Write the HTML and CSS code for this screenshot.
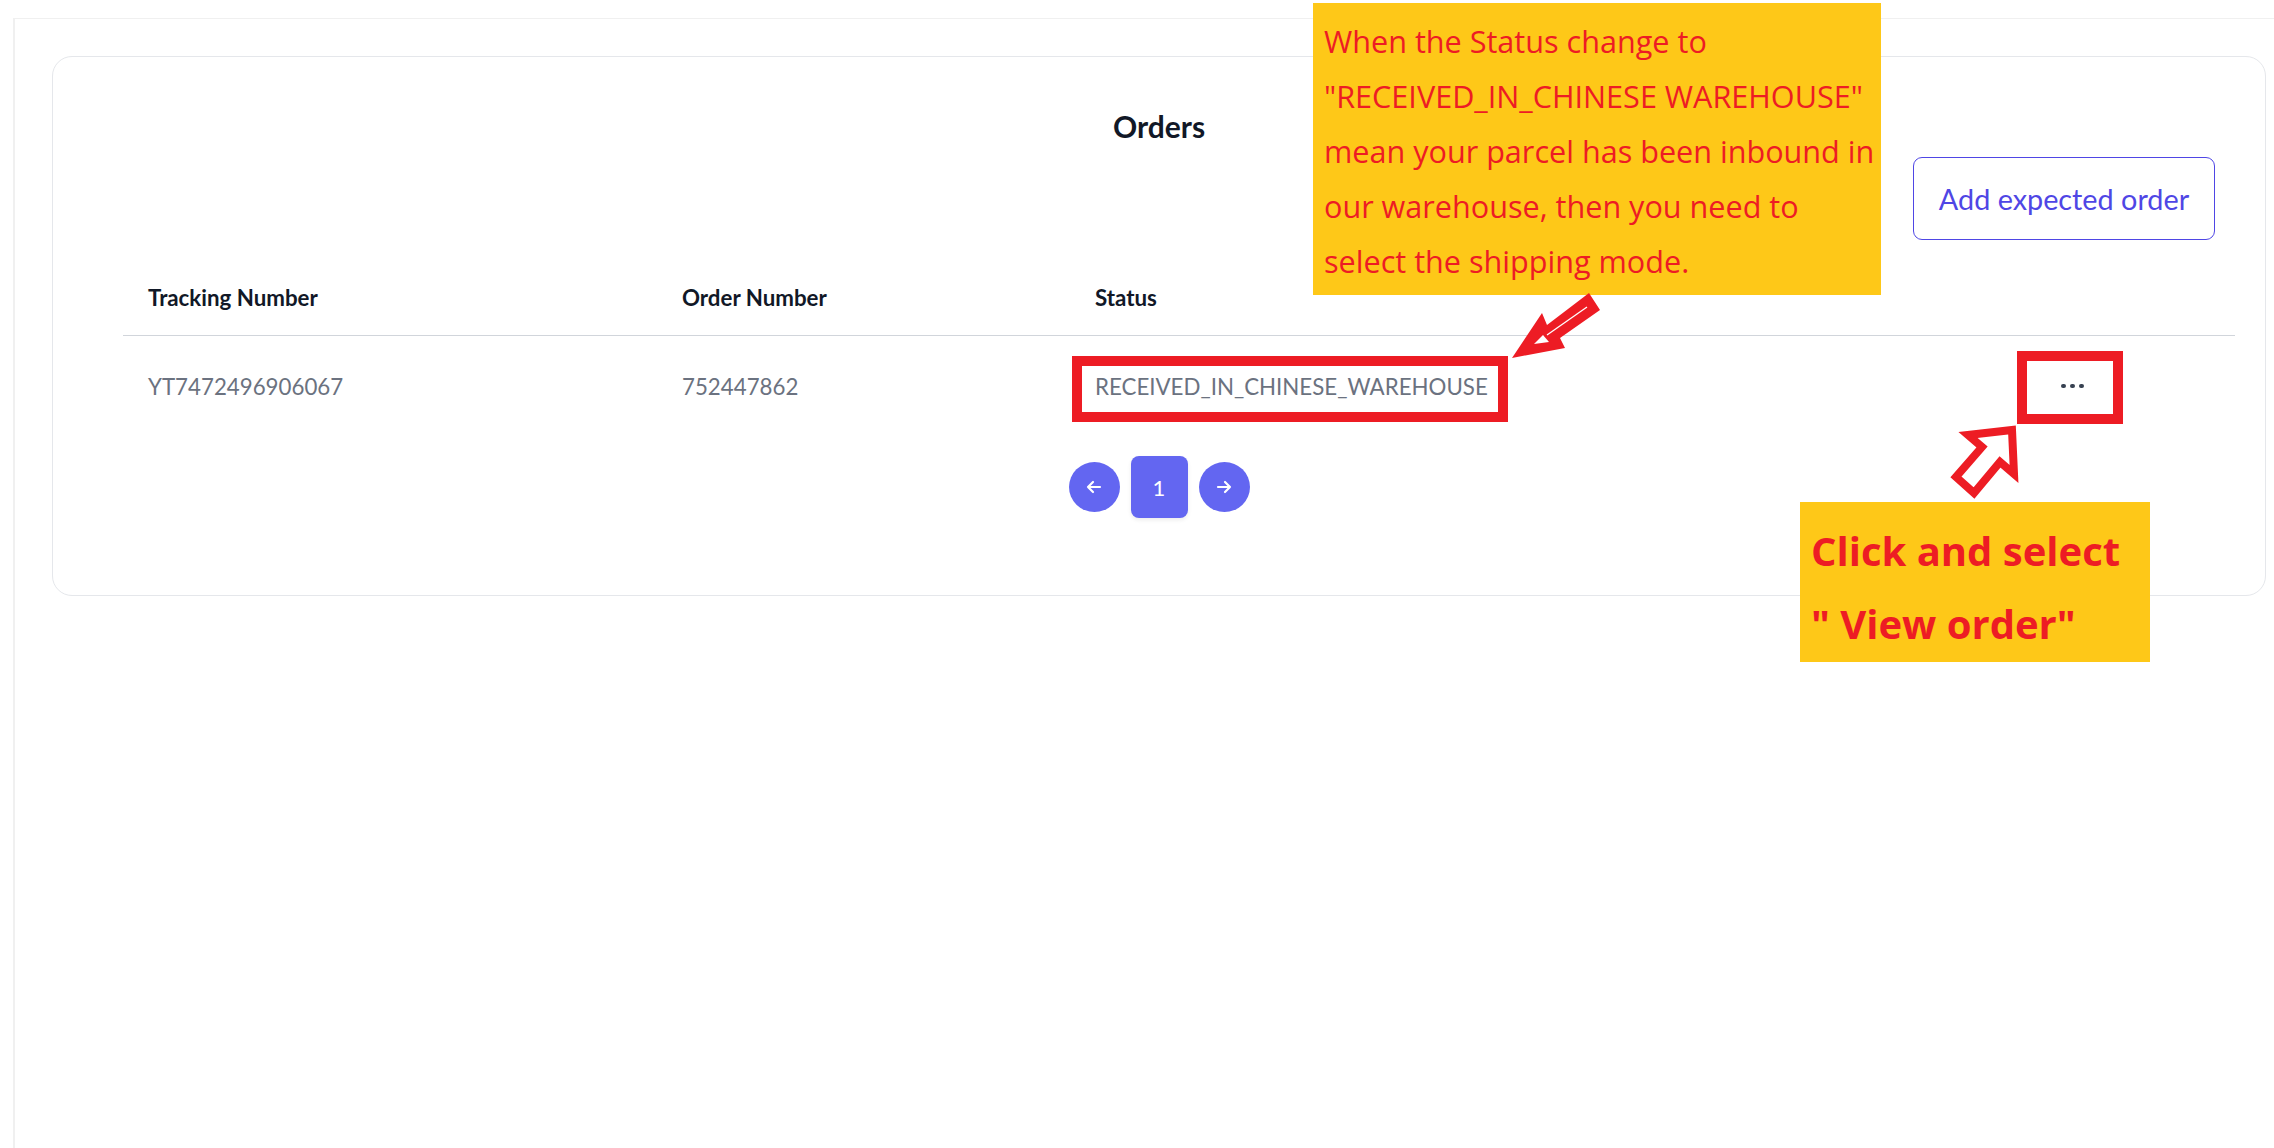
FILE: index.html
```html
<!DOCTYPE html>
<html lang="en">
<head>
    <meta charset="UTF-8">
    <meta name="viewport" content="width=device-width, initial-scale=1.0">
    <title>Orders</title>
    <link rel="stylesheet" href="styles.css">
</head>
<body>
    <div class="page">
        <div class="frame">
            <div class="card">
                <h2 class="card-title">Orders</h2>
                <div class="toolbar">
                    <button type="button" class="add-button">Add expected order</button>
                </div>

                <div class="orders-table">
                    <div class="table-row table-head">
                        <div class="cell">Tracking Number</div>
                        <div class="cell">Order Number</div>
                        <div class="cell">Status</div>
                        <div class="cell"></div>
                    </div>
                    <div class="table-row">
                        <div class="cell">YT7472496906067</div>
                        <div class="cell">752447862</div>
                        <div class="cell">RECEIVED_IN_CHINESE_WAREHOUSE</div>
                        <div class="cell cell-actions">
                            <button type="button" class="dots-button" aria-label="Actions">
                                <span></span><span></span><span></span>
                            </button>
                        </div>
                    </div>
                </div>

                <div class="pagination">
                    <button type="button" class="page-arrow" aria-label="Previous">
                        <svg width="18" height="18" viewBox="0 0 18 18"><path d="M15 9H3M8 4L3 9l5 5" fill="none" stroke="#fff" stroke-width="2.2" stroke-linecap="round" stroke-linejoin="round"/></svg>
                    </button>
                    <button type="button" class="page-number">1</button>
                    <button type="button" class="page-arrow" aria-label="Next">
                        <svg width="18" height="18" viewBox="0 0 18 18"><path d="M3 9h12M10 4l5 5-5 5" fill="none" stroke="#fff" stroke-width="2.2" stroke-linecap="round" stroke-linejoin="round"/></svg>
                    </button>
                </div>
            </div>
        </div>

        <!-- help annotations drawn over the page -->
        <div class="note note-status">
            When the Status change to<br>
            "RECEIVED_IN_CHINESE WAREHOUSE"<br>
            mean your parcel has been inbound in<br>
            our warehouse, then you need to<br>
            select the shipping mode.
        </div>
        <svg class="arrow arrow-status" width="110" height="80" viewBox="0 0 110 80">
            <polygon points="89,8 100,25 60,53 65,63 12,73 42,28 47,40" fill="#ed1c24"/>
            <path d="M87,22 L47,50" stroke="#fff" stroke-width="1.3" fill="none"/>
            <polygon points="43,50 34,59 49,57" fill="#fff"/>
        </svg>
        <div class="mark mark-status"></div>
        <div class="mark mark-dots"></div>
        <svg class="arrow arrow-dots" width="90" height="90" viewBox="0 0 90 90">
            <polygon points="72,15 74,59 60,47 34,78 16,62 42,32 28,20" fill="#fff" stroke="#ed1c24" stroke-width="8" stroke-linejoin="miter"/>
        </svg>
        <div class="note note-view">
            Click and select<br>
            " View order"
        </div>
    </div>
</body>
</html>
```

FILE: styles.css
```css
body {
    margin: 0;
    padding: 0;
    background-color: #fff;
    font-family: Lato, "Open Sans", sans-serif;
    color: #111827;
}
.page {
    position: relative;
    width: 2274px;
    height: 1148px;
    overflow: hidden;
}
.frame {
    margin: 18px 0 0 13px;
    height: 1130px;
    border-top: 1px solid #f0f0f0;
    border-left: 2px solid #f0f0f0;
    box-sizing: border-box;
    padding: 37px 0 0 37px;
}
.card {
    width: 2214px;
    height: 540px;
    box-sizing: border-box;
    border: 1.5px solid #e5e7eb;
    border-radius: 20px;
    padding: 50px 30px 0 70px;
}
.card-title {
    margin: 0 0 0 -40px;
    text-align: center;
    font-size: 30px;
    line-height: 38px;
    font-weight: 700;
    color: #111827;
}
.toolbar {
    display: flex;
    justify-content: flex-end;
    margin-top: 12px;
    padding-right: 20px;
}
.add-button {
    width: 302px;
    height: 83px;
    border: 1.5px solid #4f46e5;
    border-radius: 9px;
    background: #fff;
    color: #4f46e5;
    font-family: Lato, "Open Sans", sans-serif;
    font-size: 28.8px;
    cursor: pointer;
}
.orders-table {
    margin-top: 19px;
}
.table-row {
    display: grid;
    grid-template-columns: 534px 413px 990px 177px;
    align-items: center;
    height: 100px;
}
.table-head {
    height: 76px;
    border-bottom: 1.5px solid #d1d5db;
    font-weight: 700;
    color: #111827;
}
.cell {
    padding-left: 25px;
    font-size: 22.3px;
    color: #6b7280;
}
.table-head .cell {
    color: #111827;
}
.cell-actions {
    padding-left: 0;
}
.dots-button {
    display: flex;
    gap: 4.5px;
    margin-left: 1px;
    padding: 0;
    border: none;
    background: none;
    cursor: pointer;
}
.dots-button span {
    width: 4.5px;
    height: 4.5px;
    border-radius: 50%;
    background-color: #374151;
}
.pagination {
    display: flex;
    justify-content: center;
    align-items: center;
    gap: 11px;
    margin: 20px 0 0 -40px;
}
.page-arrow {
    width: 51px;
    height: 50px;
    border: none;
    border-radius: 50%;
    background-color: #6366f1;
    display: flex;
    align-items: center;
    justify-content: center;
    padding: 0;
}
.page-number {
    width: 57px;
    height: 62px;
    border: none;
    border-radius: 8px;
    background-color: #6366f1;
    color: #fff;
    font-family: Lato, "Open Sans", sans-serif;
    font-size: 22px;
    box-shadow: 0 2px 4px rgba(0, 0, 0, 0.08);
}

/* annotations */
.note {
    position: absolute;
    background-color: #fec818;
    color: #ed1c24;
    font-family: "Open Sans", "Noto Sans", sans-serif;
    box-sizing: border-box;
}
.note-status {
    left: 1313px;
    top: 3px;
    width: 568px;
    height: 292px;
    padding: 11px 0 0 11px;
    font-size: 30.6px;
    line-height: 55px;
}
.note-view {
    left: 1800px;
    top: 502px;
    width: 350px;
    height: 160px;
    padding: 12px 0 0 11px;
    font-size: 40px;
    line-height: 73px;
    font-weight: 700;
}
.mark {
    position: absolute;
    border: 10px solid #ed1c24;
    box-sizing: border-box;
}
.mark-status {
    left: 1072px;
    top: 356px;
    width: 436px;
    height: 66px;
}
.mark-dots {
    left: 2017px;
    top: 351px;
    width: 106px;
    height: 73px;
}
.arrow {
    position: absolute;
}
.arrow-status {
    left: 1500px;
    top: 285px;
}
.arrow-dots {
    left: 1940px;
    top: 415px;
}
```
